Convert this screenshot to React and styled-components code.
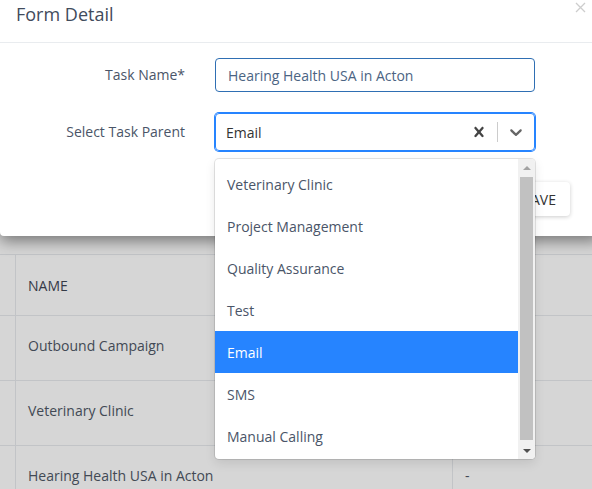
import React from 'react';
import styled, { createGlobalStyle } from 'styled-components';

const GlobalStyle = createGlobalStyle`
    html, body {
        margin: 0;
        padding: 0;
        background: #ffffff;
        overflow: hidden;
    }
    body {
        font-family: "Open Sans", "Noto Sans", Arial, sans-serif;
        font-size: 14px;
        color: #495057;
    }
    * {
        box-sizing: border-box;
    }
`;

const Page = styled.div`
    position: relative;
    width: 592px;
    height: 489px;
    overflow: hidden;
`;

const Table = styled.div`
    margin-top: 254px;
    display: grid;
    grid-template-columns: 16px 437px 1fr;
    border-top: 1px solid #e8eaee;
`;

const Cell = styled.div`
    height: ${(p) => p.$h}px;
    display: flex;
    align-items: center;
    padding: 0 0 ${(p) => (p.$head ? 0 : 6)}px 12px;
    border-bottom: 1px solid #e8eaee;
    border-right: ${(p) => (p.$last ? 'none' : '1px solid #e8eaee')};
    color: ${(p) => (p.$head ? '#3f4654' : '#4f5866')};
    white-space: nowrap;
`;

const Overlay = styled.div`
    position: absolute;
    inset: 0;
    background: rgba(0, 0, 0, 0.16);
`;

const Modal = styled.div`
    position: absolute;
    top: 0;
    left: 0;
    width: 600px;
    background: #ffffff;
    border-radius: 0 0 4px 4px;
    box-shadow: 0 5px 15px rgba(0, 0, 0, 0.45);
`;

const ModalHeader = styled.div`
    height: 43px;
    display: flex;
    justify-content: space-between;
    padding: 2px 0 0 16px;
    border-bottom: 1px solid #e9ecef;
`;

const Title = styled.div`
    font-size: 18px;
    line-height: 24px;
    color: #414b5c;
`;

const Close = styled.button`
    align-self: flex-start;
    display: flex;
    margin: 0 14px 0 0;
    padding: 0;
    border: none;
    background: none;
    color: #cdcdcd;
`;

const ModalBody = styled.div`
    padding: 15px 0 0;
    display: flex;
    flex-direction: column;
    gap: 21px;
`;

const FormRow = styled.div`
    display: grid;
    grid-template-columns: 185px 320px;
    column-gap: 30px;
    align-items: center;
`;

const Label = styled.label`
    text-align: right;
    color: #4a5568;
    line-height: 20px;
`;

const TextInput = styled.div`
    height: 34px;
    display: flex;
    align-items: center;
    padding: 0 12px;
    border: 1px solid #2f6fb3;
    border-radius: 4px;
    color: #4b6483;
`;

const SelectControl = styled.div`
    position: relative;
    height: 38px;
    display: flex;
    align-items: center;
    border: 1px solid #2684ff;
    box-shadow: 0 0 0 1px #2684ff;
    border-radius: 4px;
`;

const SelectValue = styled.div`
    flex: 1;
    padding: 0 10px;
    color: #333333;
`;

const Indicator = styled.div`
    display: flex;
    padding: 8px;
    color: ${(p) => p.$color};
`;

const Separator = styled.span`
    align-self: stretch;
    width: 1px;
    margin: 8px 0;
    background: #cccccc;
`;

const Menu = styled.div`
    position: absolute;
    top: calc(100% + 9px);
    left: -1px;
    right: -1px;
    height: 300px;
    display: flex;
    background: #ffffff;
    border-radius: 4px;
    overflow: hidden;
    box-shadow: 0 0 0 1px rgba(0, 0, 0, 0.1), 0 4px 11px rgba(0, 0, 0, 0.1);
    z-index: 2;
`;

const OptionList = styled.div`
    flex: 1;
    padding-top: 4px;
`;

const Option = styled.div`
    height: 42px;
    display: flex;
    align-items: center;
    padding: 0 12px;
    background: ${(p) => (p.$active ? '#2684ff' : 'transparent')};
    color: ${(p) => (p.$active ? '#ffffff' : '#4a5568')};
`;

const ScrollRail = styled.div`
    width: 17px;
    display: flex;
    flex-direction: column;
    background: #f1f1f1;
`;

const ScrollButton = styled.div`
    height: 17px;
    display: flex;
    align-items: center;
    justify-content: center;
    &::before {
        content: '';
        border-left: 4px solid transparent;
        border-right: 4px solid transparent;
        ${(p) => (p.$down ? 'border-top: 4px solid #505050;' : 'border-bottom: 4px solid #a3a3a3;')}
    }
`;

const ScrollThumb = styled.div`
    flex: 1;
    margin: 1px 2px 2px;
    background: #c1c1c1;
`;

const ModalFooter = styled.div`
    display: flex;
    justify-content: flex-end;
    padding: 31px 30px 20px 0;
`;

const Button = styled.button`
    height: 34px;
    padding: 0 14px;
    border: none;
    border-radius: 4px;
    background: #ffffff;
    box-shadow: 0 1px 4px rgba(0, 0, 0, 0.2);
    font-family: inherit;
    font-size: 14px;
    color: #333333;
`;

const CloseIcon = () => (
    <svg width="11" height="11" viewBox="0 0 11 11" stroke="currentColor" strokeWidth="1.3" fill="none">
        <path d="M1 1 L10 10 M10 1 L1 10" />
    </svg>
);

const CrossIcon = () => (
    <svg width="20" height="20" viewBox="0 0 20 20" fill="currentColor">
        <path d="M14.348 14.849c-0.469 0.469-1.229 0.469-1.697 0l-2.651-3.030-2.651 3.029c-0.469 0.469-1.229 0.469-1.697 0-0.469-0.469-0.469-1.229 0-1.697l2.758-3.15-2.759-3.152c-0.469-0.469-0.469-1.228 0-1.697s1.228-0.469 1.697 0l2.652 3.031 2.651-3.031c0.469-0.469 1.228-0.469 1.697 0s0.469 1.229 0 1.697l-2.758 3.152 2.758 3.15c0.469 0.469 0.469 1.229 0 1.698z" />
    </svg>
);

const ChevronIcon = () => (
    <svg width="20" height="20" viewBox="0 0 20 20" fill="currentColor">
        <path d="M4.516 7.548c0.436-0.446 1.043-0.481 1.576 0l3.908 3.747 3.908-3.747c0.533-0.481 1.141-0.446 1.574 0 0.436 0.445 0.408 1.197 0 1.615-0.406 0.418-4.695 4.502-4.695 4.502-0.217 0.223-0.502 0.335-0.787 0.335s-0.57-0.112-0.789-0.335c0 0-4.287-4.084-4.695-4.502s-0.436-1.17 0-1.615z" />
    </svg>
);

const rows = [
    { name: 'NAME', h: 61, head: true, other: '' },
    { name: 'Outbound Campaign', h: 65, other: '' },
    { name: 'Veterinary Clinic', h: 65, other: '' },
    { name: 'Hearing Health USA in Acton', h: 65, other: '-' },
];

const options = [
    'Veterinary Clinic',
    'Project Management',
    'Quality Assurance',
    'Test',
    'Email',
    'SMS',
    'Manual Calling',
];

const App = () => {
    return (
        <Page>
            <GlobalStyle />
            <Table>
                {rows.map((r) => (
                    <React.Fragment key={r.name}>
                        <Cell $h={r.h} $head={r.head} />
                        <Cell $h={r.h} $head={r.head}>{r.name}</Cell>
                        <Cell $h={r.h} $head={r.head} $last>{r.other}</Cell>
                    </React.Fragment>
                ))}
            </Table>
            <Overlay />
            <Modal>
                <ModalHeader>
                    <Title>Form Detail</Title>
                    <Close aria-label="Close"><CloseIcon /></Close>
                </ModalHeader>
                <ModalBody>
                    <FormRow>
                        <Label>Task Name*</Label>
                        <TextInput>Hearing Health USA in Acton</TextInput>
                    </FormRow>
                    <FormRow>
                        <Label>Select Task Parent</Label>
                        <SelectControl>
                            <SelectValue>Email</SelectValue>
                            <Indicator $color="#444444"><CrossIcon /></Indicator>
                            <Separator />
                            <Indicator $color="#666666"><ChevronIcon /></Indicator>
                            <Menu>
                                <OptionList>
                                    {options.map((o) => (
                                        <Option key={o} $active={o === 'Email'}>{o}</Option>
                                    ))}
                                </OptionList>
                                <ScrollRail>
                                    <ScrollButton />
                                    <ScrollThumb />
                                    <ScrollButton $down />
                                </ScrollRail>
                            </Menu>
                        </SelectControl>
                    </FormRow>
                </ModalBody>
                <ModalFooter>
                    <Button>SAVE</Button>
                </ModalFooter>
            </Modal>
        </Page>
    );
};

export default App;
